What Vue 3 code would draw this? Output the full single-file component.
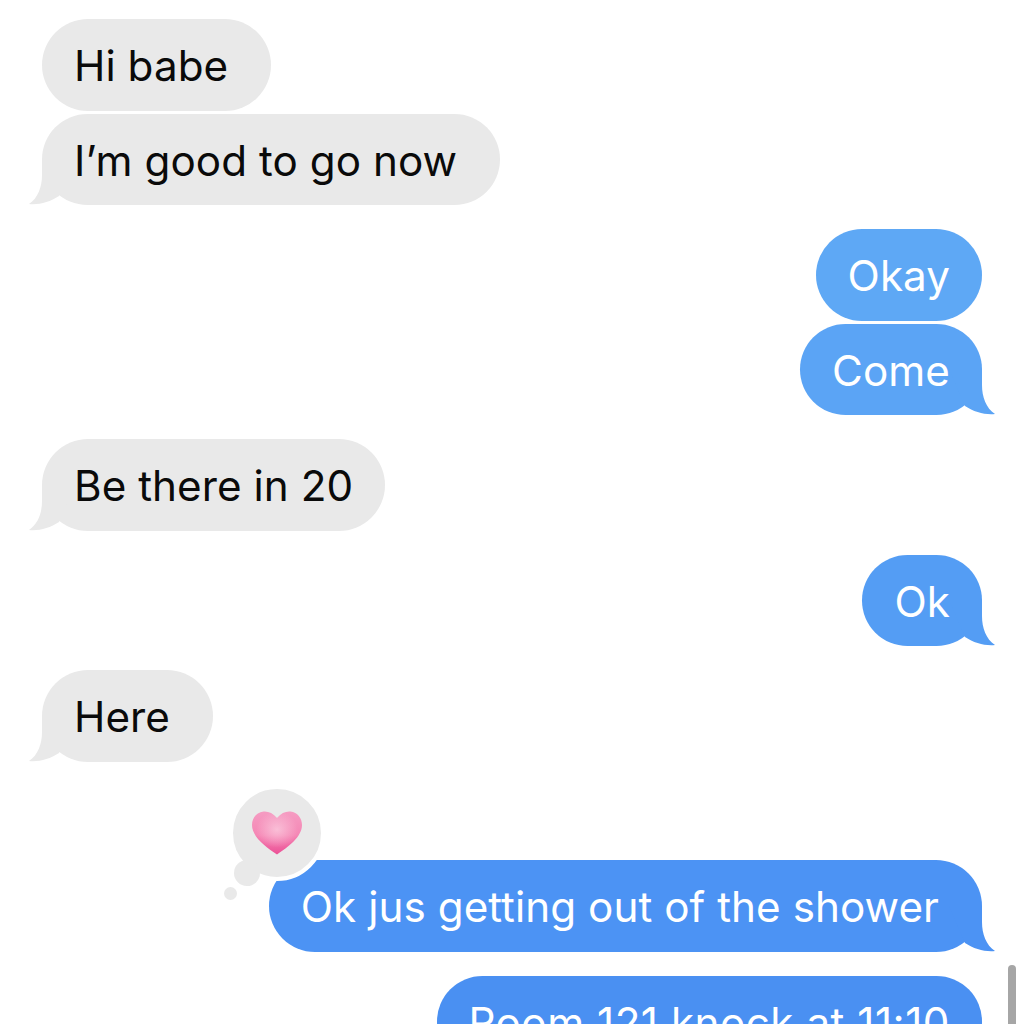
<template>
  <div class="thread">
    <div
      v-for="m in messages"
      :key="m.text"
      class="row"
      :class="[m.me ? 'me' : 'them', { 'new-group': m.group, 'has-reaction': m.heart }]"
    >
      <div class="bubble" :class="{ roomy: m.roomy, digits: m.digits }" :style="{ background: m.color }">
        {{ m.text }}
        <svg v-if="m.tail" class="tail" width="46" height="46" viewBox="0 0 46 46">
          <path :fill="m.color" d="M13 0 L13 16 C13 28 9 39 0 45 C10 46 21 43 30 37 L46 0 Z" />
        </svg>
        <div v-if="m.heart" class="reaction">
          <span class="dot-small"></span>
          <span class="dot-big">
            <svg width="50" height="44" viewBox="0 0 50 44">
              <defs>
                <linearGradient id="heartFill" x1="0" y1="0" x2="0" y2="1">
                  <stop offset="0" stop-color="#f59cc2" />
                  <stop offset="0.55" stop-color="#f587b5" />
                  <stop offset="1" stop-color="#ec5096" />
                </linearGradient>
                <radialGradient id="heartGlow" cx="0.5" cy="0.42" r="0.42">
                  <stop offset="0" stop-color="#fbcfe1" stop-opacity="0.75" />
                  <stop offset="1" stop-color="#fbcfe1" stop-opacity="0" />
                </radialGradient>
              </defs>
              <path fill="url(#heartFill)" d="M25 7 C21 2 16 0 11.500 0.500 C4.500 1.500 0 7 0 14 C0 26 14 36 25 43.500 C36 36 50 26 50 14 C50 7 45.500 1.500 38.500 0.500 C34 0 29 2 25 7 Z" />
              <path fill="url(#heartGlow)" d="M25 7 C21 2 16 0 11.500 0.500 C4.500 1.500 0 7 0 14 C0 26 14 36 25 43.500 C36 36 50 26 50 14 C50 7 45.500 1.500 38.500 0.500 C34 0 29 2 25 7 Z" />
            </svg>
          </span>
          <span class="dot-mid"></span>
        </div>
      </div>
    </div>
    <div class="scrollbar"></div>
  </div>
</template>

<script setup>
const messages = [
  { text: 'Hi babe', roomy: true, color: '#e9e9e9' },
  { text: 'I’m good to go now', tail: true, roomy: true, color: '#e9e9e9' },
  { text: 'Okay', me: true, group: true, color: '#5ea8f5' },
  { text: 'Come', me: true, tail: true, color: '#5ba4f5' },
  { text: 'Be there in 20', tail: true, group: true, color: '#e9e9e9' },
  { text: 'Ok', me: true, tail: true, group: true, color: '#549df4' },
  { text: 'Here', tail: true, group: true, roomy: true, color: '#e9e9e9' },
  { text: 'Ok jus getting out of the shower', me: true, tail: true, roomy: true, heart: true, color: '#4c93f4' },
  { text: 'Room 121 knock at 11:10', me: true, group: true, digits: true, color: '#4a90f2' },
]
</script>

<style>
html, body { background: #fff; }
</style>

<style scoped>
.thread {
  position: relative;
  height: 1024px;
  overflow: hidden;
  padding: 19px 42px 0;
  box-sizing: border-box;
  background: #fff;
  font-family: Inter, "Liberation Sans", sans-serif;
  font-size: 42.2px;
  font-weight: 380;
  letter-spacing: 0.06px;
}

.row { display: flex; margin-top: 3px; }
.row:first-child { margin-top: 0; }
.row.new-group { margin-top: 24px; }
.row.has-reaction { margin-top: 98.500px; }
.row.me { justify-content: flex-end; }

.bubble {
  position: relative;
  height: 91.500px;
  line-height: 93px;
  padding: 0 32px;
  border-radius: 46px;
  white-space: nowrap;
  flex: none;
}
.bubble.roomy { padding-right: 43px; }
.bubble.digits { letter-spacing: 0.5px; }
.them .bubble { color: #0a0a0a; }
.me .bubble { color: #fff; }

.tail { position: absolute; bottom: 0; left: -13px; }
.me .tail { left: auto; right: -13px; transform: scaleX(-1); }

.reaction { position: absolute; left: 0; top: 0; }
.reaction span { position: absolute; border-radius: 50%; background: #e9e9e9; }
.dot-small { width: 13px; height: 13px; left: -45px; top: 26.500px; }
.dot-mid { width: 26px; height: 26px; left: -35px; top: 0; }
.dot-big {
  width: 88px;
  height: 88px;
  left: -40px;
  top: -75px;
  border: 4px solid #fff;
  display: flex;
  align-items: center;
  justify-content: center;
}
.scrollbar {
  position: absolute;
  left: 1008px;
  top: 965px;
  width: 8px;
  height: 80px;
  border-radius: 4px;
  background: #a6a6a6;
}
</style>
